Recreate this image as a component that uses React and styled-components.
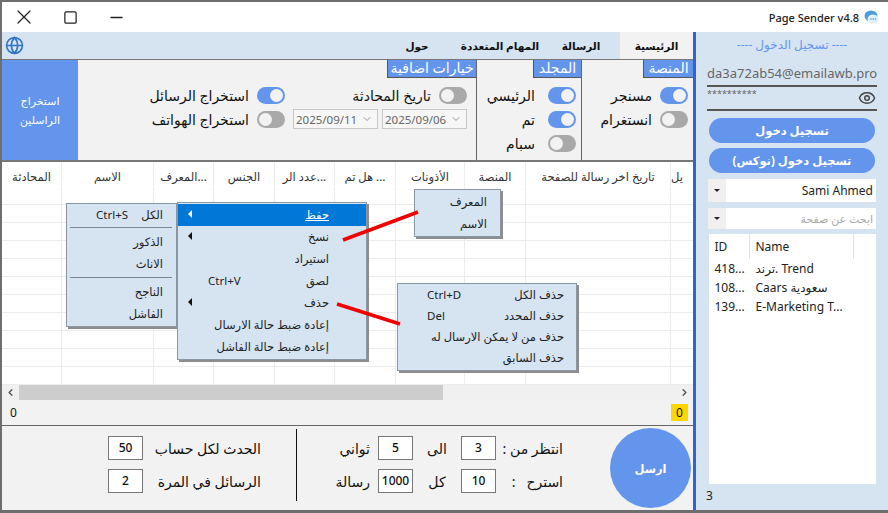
import styled, { createGlobalStyle } from 'styled-components';
import { X, Square, Minus, Globe, Eye, ChevronDown, ChevronLeft, ChevronRight } from 'lucide-react';

const GlobalStyle = createGlobalStyle`
  html, body {
    margin: 0;
    padding: 0;
    width: 888px;
    height: 513px;
    overflow: hidden;
    background: #fff;
  }
  * { box-sizing: border-box; }
  body {
    font-family: "Noto Sans", "DejaVu Sans", sans-serif;
    font-size: 12px;
    color: #111;
  }
`;

const ACCENT = '#6495ed';
const PANEL = '#d6e4f2';

const Win = styled.div`
  position: relative;
  width: 888px;
  height: 513px;
  display: flex;
  flex-direction: column;
  border-top: 2px solid #6e6e6e;
  border-left: 2px solid #6e6e6e;
  border-bottom: 3px solid #6e6e6e;
  overflow: hidden;
`;

const TitleBar = styled.div`
  height: 30px;
  display: flex;
  align-items: center;
  background: #fff;
  flex: none;
`;

const WinButtons = styled.div`
  display: flex;
  align-items: center;
  margin-left: -1px;
  color: #222;
`;

const WinButton = styled.div`
  width: 46px;
  display: flex;
  justify-content: center;
`;

const TitleText = styled.div`
  margin-left: auto;
  display: flex;
  align-items: center;
  gap: 5px;
  padding-right: 9px;
  font-size: 11px;
  font-weight: 500;
  color: #222;
`;

const Body = styled.div`
  flex: 1;
  display: flex;
  min-height: 0;
`;

const Main = styled.div`
  width: 691px;
  display: flex;
  flex-direction: column;
  background: #f2f2f2;
`;

const Tabs = styled.div`
  height: 27px;
  flex: none;
  display: flex;
  align-items: center;
  background: ${PANEL};
  padding-left: 3px;
`;

const Tab = styled.div`
  width: ${(p) => p.$w}px;
  height: 100%;
  display: flex;
  align-items: center;
  justify-content: center;
  font-size: 10.5px;
  font-weight: 700;
  direction: rtl;
  background: ${(p) => (p.$active ? '#f2f2f2' : 'transparent')};
`;

const TabSpacer = styled.div`
  flex: 1;
`;

const Options = styled.div`
  height: 103px;
  flex: none;
  display: flex;
  border-top: 1px solid #777;
  border-bottom: 2px solid #777;
`;

const ExtractButton = styled.div`
  width: 76px;
  flex: none;
  background: ${ACCENT};
  color: #fff;
  font-size: 11px;
  line-height: 19px;
  text-align: center;
  display: flex;
  align-items: center;
  justify-content: center;
`;

const Section = styled.div`
  width: ${(p) => (p.$w ? `${p.$w}px` : 'auto')};
  flex: ${(p) => (p.$w ? 'none' : '1')};
  display: flex;
  flex-direction: column;
  align-items: flex-end;
  border-right: 1px solid #666;
  &:last-child { border-right: none; }
`;

const Badge = styled.div`
  height: 18px;
  padding: 0 2px;
  width: ${(p) => p.$w}px;
  background: ${ACCENT};
  color: #fff;
  font-size: 14px;
  line-height: 16px;
  text-align: center;
  white-space: nowrap;
  direction: rtl;
  border-left: 1px solid #555;
  border-bottom: 1px solid #555;
`;

const SectionBody = styled.div`
  display: flex;
  gap: 8px;
  padding: 9px ${(p) => p.$pr}px 0 0;
`;

const Stack = styled.div`
  display: flex;
  flex-direction: column;
  align-items: flex-end;
  gap: ${(p) => p.$gap || 7}px;
`;

const ToggleRow = styled.div`
  height: 17px;
  display: flex;
  align-items: center;
  justify-content: flex-end;
  gap: ${(p) => p.$gap}px;
`;

const ToggleLabel = styled.span`
  font-size: 14px;
  direction: rtl;
  white-space: nowrap;
`;

const ToggleTrack = styled.div`
  width: 28px;
  height: 17px;
  border-radius: 9px;
  padding: 2px;
  display: flex;
  justify-content: ${(p) => (p.$on ? 'flex-end' : 'flex-start')};
  background: ${(p) => (p.$on ? ACCENT : '#a9a9a9')};
`;

const ToggleKnob = styled.div`
  width: 13px;
  height: 13px;
  border-radius: 50%;
  background: #f2f2f2;
`;

const Toggle = ({ label, on, gap = 8 }) => (
  <ToggleRow $gap={gap}>
    <ToggleLabel>{label}</ToggleLabel>
    <ToggleTrack $on={on}>
      <ToggleKnob />
    </ToggleTrack>
  </ToggleRow>
);

const Dates = styled.div`
  display: flex;
  gap: 4px;
`;

const DateBox = styled.div`
  width: 85px;
  height: 20px;
  display: flex;
  align-items: center;
  justify-content: space-between;
  padding: 0 4px 0 2px;
  background: #f7f7f7;
  border: 1px solid #c8c8c8;
  color: #666;
  font-size: 11.5px;
`;

const Table = styled.div`
  height: 223px;
  flex: none;
  background: #fff;
  overflow: hidden;
`;

const Row = styled.div`
  height: ${(p) => p.$h}px;
  display: flex;
  border-bottom: 1px solid ${(p) => (p.$head ? 'transparent' : '#ececec')};
`;

const Cell = styled.div`
  width: ${(p) => p.$w}px;
  flex: none;
  padding-top: ${(p) => (p.$head ? 4 : 0)}px;
  border-right: 1px solid #ececec;
  display: flex;
  align-items: center;
  justify-content: ${(p) => p.$align || 'center'};
  overflow: hidden;
  white-space: nowrap;
  font-size: 11.5px;
  font-weight: 500;
  color: #333;
`;

const ScrollBar = styled.div`
  height: 15px;
  flex: none;
  display: flex;
  align-items: center;
  background: #f0f0f0;
  color: #555;
`;

const ScrollArrow = styled.div`
  width: 17px;
  flex: none;
  display: flex;
  justify-content: center;
`;

const ScrollTrack = styled.div`
  flex: 1;
  height: 100%;
`;

const ScrollThumb = styled.div`
  width: 424px;
  height: 100%;
  background: #cdcdcd;
`;

const Status = styled.div`
  height: 26px;
  flex: none;
  display: flex;
  align-items: center;
  justify-content: space-between;
  padding: 0 5px 0 8px;
  font-size: 12px;
  border-bottom: 1px solid #666;
`;

const Counter = styled.div`
  width: 17px;
  height: 17px;
  background: #ffd700;
  text-align: center;
  line-height: 17px;
`;

const Bottom = styled.div`
  flex: 1;
  min-height: 0;
  display: flex;
  align-items: center;
  padding: 0 2px 0 106px;
  background: #f2f2f2;
`;

const FormGrid = styled.div`
  display: grid;
  grid-template-columns: ${(p) => p.$cols};
  row-gap: 9px;
  align-items: center;
  margin-bottom: 7px;
`;

const NumBox = styled.div`
  width: 35px;
  height: 24px;
  background: #fff;
  border: 1px solid #777;
  text-align: center;
  line-height: 21px;
  font-size: 12px;
  font-weight: 500;
`;

const FormLabel = styled.span`
  font-size: 14px;
  direction: rtl;
  white-space: nowrap;
  text-align: ${(p) => p.$align || 'right'};
`;

const Divider = styled.div`
  width: 1px;
  height: 72px;
  background: #111;
  margin: 0 36px 7px 35px;
`;

const SendButton = styled.div`
  width: 81px;
  height: 80px;
  margin-left: auto;
  border-radius: 50%;
  background: ${ACCENT};
  color: #fff;
  font-size: 11.5px;
  font-weight: 700;
  display: flex;
  align-items: center;
  justify-content: center;
`;

const Side = styled.div`
  flex: 1;
  display: flex;
  flex-direction: column;
  align-items: center;
  background: ${PANEL};
  border-left: 3px solid #3064d0;
  padding: 0 10px 0 10px;
`;

const LoginTitle = styled.div`
  height: 27px;
  padding-top: 4px;
  color: ${ACCENT};
  font-size: 12px;
  direction: rtl;
`;

const Field = styled.div`
  width: 170px;
  height: ${(p) => p.$h}px;
  padding-top: ${(p) => (p.$top ? 0 : 2)}px;
  display: flex;
  align-items: ${(p) => (p.$top ? 'flex-start' : 'center')};
  justify-content: space-between;
  border-bottom: 2px solid #555;
  color: #666;
  font-size: ${(p) => p.$fs}px;
  white-space: nowrap;
`;

const EyeSlot = styled.span`
  align-self: center;
  margin-right: 1px;
  display: flex;
`;

const PillButton = styled.div`
  width: 166px;
  height: 25px;
  margin-top: ${(p) => p.$mt}px;
  border-radius: 13px;
  background: ${ACCENT};
  color: #fff;
  font-size: 11.5px;
  font-weight: 700;
  direction: rtl;
  display: flex;
  align-items: center;
  justify-content: center;
`;

const Combo = styled.div`
  width: 168px;
  height: ${(p) => p.$h}px;
  margin-top: ${(p) => p.$mt}px;
  background: #fff;
  display: flex;
  align-items: center;
`;

const ComboArrow = styled.div`
  width: 18px;
  height: 100%;
  background: #f0f0f0;
  display: flex;
  align-items: center;
  justify-content: center;
  &::after {
    content: '';
    border-left: 3px solid transparent;
    border-right: 3px solid transparent;
    border-top: 3px solid #222;
  }
`;

const ComboText = styled.div`
  flex: 1;
  text-align: right;
  padding-right: 3px;
  font-size: ${(p) => (p.$muted ? 11 : 12)}px;
  color: ${(p) => (p.$muted ? '#aaa' : '#222')};
`;

const ListBox = styled.div`
  width: 167px;
  height: 250px;
  margin-top: 5px;
  background: #fff;
`;

const ListRow = styled.div`
  height: ${(p) => p.$h}px;
  display: flex;
  align-items: center;
  font-size: 12px;
  color: #222;
`;

const IdCol = styled.div`
  width: 41px;
  height: 100%;
  padding-left: 6px;
  display: flex;
  align-items: center;
  border-right: 1px solid ${(p) => (p.$head ? '#e2e2e2' : 'transparent')};
`;

const NameCol = styled.div`
  width: 104px;
  height: 100%;
  padding-left: 6px;
  display: flex;
  align-items: center;
  white-space: nowrap;
  border-right: 1px solid ${(p) => (p.$head ? '#e2e2e2' : 'transparent')};
`;

const ListCount = styled.div`
  align-self: flex-start;
  margin-top: 3px;
  font-size: 12px;
  color: #222;
`;

const Menu = styled.div`
  position: absolute;
  left: ${(p) => p.$x}px;
  top: ${(p) => p.$y}px;
  width: ${(p) => p.$w}px;
  padding: 1px 0;
  background: ${PANEL};
  border: 1px solid #8a97a3;
  box-shadow: 2px 2px 0 #8d8d8d;
  z-index: 2;
`;

const MenuItem = styled.div`
  height: ${(p) => p.$h || 22}px;
  display: flex;
  align-items: center;
  padding-right: ${(p) => p.$pr}px;
  padding-left: ${(p) => p.$pl || 0}px;
  padding-bottom: 2px;
  font-size: 11.5px;
  color: ${(p) => (p.$sel ? '#fff' : '#222')};
  background: ${(p) => (p.$sel ? '#0078d7' : 'transparent')};
`;

const MenuLabel = styled.span`
  margin-left: auto;
  direction: rtl;
  white-space: nowrap;
  text-decoration: ${(p) => (p.$sel ? 'underline' : 'none')};
`;

const MenuKey = styled.span`
  font-size: 11.5px;
`;

const MenuArrow = styled.span`
  position: absolute;
  left: 10px;
  width: 0;
  height: 0;
  border-top: 4px solid transparent;
  border-bottom: 4px solid transparent;
  border-right: 4px solid ${(p) => (p.$sel ? '#fff' : '#111')};
`;

const MenuSep = styled.div`
  height: 1px;
  margin: 2px 4px 3px 3px;
  background: #7b8790;
`;

const Arrows = styled.svg`
  position: absolute;
  left: -2px;
  top: -2px;
  z-index: 3;
  pointer-events: none;
`;

const columns = [
  { w: 60, t: 'المحادثة' },
  { w: 92, t: 'الاسم' },
  { w: 60, t: 'المعرف...' },
  { w: 61, t: 'الجنس' },
  { w: 60, t: 'عدد الر...' },
  { w: 61, t: 'هل تم ...' },
  { w: 69, t: 'الأذونات' },
  { w: 61, t: 'المنصة' },
  { w: 145, t: 'تاريخ اخر رسالة للصفحة' },
  { w: 30, t: 'يل', align: 'flex-start' },
];

const ChatIcon = () => (
  <svg width="15" height="15" viewBox="0 0 15 15">
    <ellipse cx="7" cy="6" rx="6.5" ry="5.5" fill="#4d9bdc" />
    <ellipse cx="9" cy="9" rx="5.5" ry="4.5" fill="#dff0fb" />
    <path d="M11 12l2 2.5v-3.5z" fill="#dff0fb" />
    <circle cx="7" cy="9" r=".8" fill="#4d9bdc" />
    <circle cx="9.2" cy="9" r=".8" fill="#4d9bdc" />
    <circle cx="11.4" cy="9" r=".8" fill="#4d9bdc" />
  </svg>
);

const App = () => {
  const rows = Array.from({ length: 11 });

  return (
    <>
      <GlobalStyle />
      <Win>
        <TitleBar>
          <WinButtons>
            <WinButton><X size={24} strokeWidth={1.2} /></WinButton>
            <WinButton><Square size={15} strokeWidth={2} /></WinButton>
            <WinButton><Minus size={19} strokeWidth={1.6} /></WinButton>
          </WinButtons>
          <TitleText>
            Page Sender v4.8
            <ChatIcon />
          </TitleText>
        </TitleBar>
        <Body>
          <Main>
            <Tabs>
              <Globe size={19} color="#2f74c8" strokeWidth={2} />
              <TabSpacer />
              <Tab $w={82}>حول</Tab>
              <Tab $w={84}>المهام المتعددة</Tab>
              <Tab $w={78}>الرسالة</Tab>
              <Tab $w={73} $active>الرئيسية</Tab>
            </Tabs>
            <Options>
              <ExtractButton>
                استخراج
                <br />
                الراسلين
              </ExtractButton>
              <Section>
                <Badge $w={89}>خيارات اضافية</Badge>
                <SectionBody $pr={9}>
                  <Stack>
                    <Toggle label="استخراج الرسائل" on />
                    <Toggle label="استخراج الهواتف" />
                  </Stack>
                  <Stack $gap={5}>
                    <Toggle label="تاريخ المحادثة" />
                    <Dates>
                      <DateBox>
                        2025/09/11
                        <ChevronDown size={12} color="#999" />
                      </DateBox>
                      <DateBox>
                        2025/09/06
                        <ChevronDown size={12} color="#999" />
                      </DateBox>
                    </Dates>
                  </Stack>
                </SectionBody>
              </Section>
              <Section $w={105}>
                <Badge $w={48}>المجلد</Badge>
                <SectionBody $pr={5}>
                  <Stack>
                    <Toggle label="الرئيسي" on gap={13} />
                    <Toggle label="تم" on gap={13} />
                    <Toggle label="سبام" gap={13} />
                  </Stack>
                </SectionBody>
              </Section>
              <Section $w={111}>
                <Badge $w={50}>المنصة</Badge>
                <SectionBody $pr={5}>
                  <Stack>
                    <Toggle label="مسنجر" on />
                    <Toggle label="انستغرام" />
                  </Stack>
                </SectionBody>
              </Section>
            </Options>
            <Table>
              <Row $h={25} $head>
                {columns.map((c) => (
                  <Cell key={c.t} $w={c.w} $align={c.align} $head>{c.t}</Cell>
                ))}
              </Row>
              {rows.map((_, i) => (
                <Row key={i} $h={18}>
                  {columns.map((c) => (
                    <Cell key={c.t} $w={c.w} />
                  ))}
                </Row>
              ))}
            </Table>
            <ScrollBar>
              <ScrollArrow><ChevronLeft size={11} strokeWidth={3} /></ScrollArrow>
              <ScrollTrack><ScrollThumb /></ScrollTrack>
              <ScrollArrow><ChevronRight size={11} strokeWidth={3} /></ScrollArrow>
            </ScrollBar>
            <Status>
              <span>0</span>
              <Counter>0</Counter>
            </Status>
            <Bottom>
              <FormGrid $cols="35px 118px">
                <NumBox>50</NumBox>
                <FormLabel>الحدث لكل حساب</FormLabel>
                <NumBox>2</NumBox>
                <FormLabel>الرسائل في المرة</FormLabel>
              </FormGrid>
              <Divider />
              <FormGrid $cols="37px 8px 35px 48px 35px 67px">
                <FormLabel>ثواني</FormLabel>
                <span />
                <NumBox>5</NumBox>
                <FormLabel $align="center">الى</FormLabel>
                <NumBox>3</NumBox>
                <FormLabel>انتظر من :</FormLabel>
                <FormLabel>رسالة</FormLabel>
                <span />
                <NumBox>1000</NumBox>
                <FormLabel $align="center">كل</FormLabel>
                <NumBox>10</NumBox>
                <FormLabel>استرح &nbsp; :</FormLabel>
              </FormGrid>
              <SendButton>ارسل</SendButton>
            </Bottom>
          </Main>
          <Side>
            <LoginTitle>---- تسجيل الدخول ----</LoginTitle>
            <Field $h={28} $fs={13}>da3a72ab54@emailawb.pro</Field>
            <Field $h={24} $fs={9} $top>
              **********
              <EyeSlot><Eye size={18} color="#444" /></EyeSlot>
            </Field>
            <PillButton $mt={7}>تسجيل دخول</PillButton>
            <PillButton $mt={5}>تسجيل دخول (نوكس)</PillButton>
            <Combo $h={23} $mt={6}>
              <ComboArrow />
              <ComboText>Sami Ahmed</ComboText>
            </Combo>
            <Combo $h={21} $mt={6}>
              <ComboArrow />
              <ComboText $muted>ابحث عن صفحة</ComboText>
            </Combo>
            <ListBox>
              <ListRow $h={25}>
                <IdCol $head>ID</IdCol>
                <NameCol $head>Name</NameCol>
              </ListRow>
              <ListRow $h={19}>
                <IdCol>418...</IdCol>
                <NameCol>ترند. Trend</NameCol>
              </ListRow>
              <ListRow $h={19}>
                <IdCol>108...</IdCol>
                <NameCol>Caars سعودية</NameCol>
              </ListRow>
              <ListRow $h={19}>
                <IdCol>139...</IdCol>
                <NameCol>E-Marketing T...</NameCol>
              </ListRow>
            </ListBox>
            <ListCount>3</ListCount>
          </Side>
        </Body>

        <Menu $x={64} $y={201} $w={111}>
          <MenuItem $pr={13} $pl={29} $h={20}>
            <MenuKey>Ctrl+S</MenuKey>
            <MenuLabel>الكل</MenuLabel>
          </MenuItem>
          <MenuSep />
          <MenuItem $pr={13}><MenuLabel>الذكور</MenuLabel></MenuItem>
          <MenuItem $pr={13}><MenuLabel>الاناث</MenuLabel></MenuItem>
          <MenuSep />
          <MenuItem $pr={13}><MenuLabel>الناجح</MenuLabel></MenuItem>
          <MenuItem $pr={13}><MenuLabel>الفاشل</MenuLabel></MenuItem>
        </Menu>

        <Menu $x={175} $y={200} $w={190}>
          <MenuItem $sel $pr={37}>
            <MenuArrow $sel />
            <MenuLabel $sel>حفظ</MenuLabel>
          </MenuItem>
          <MenuItem $pr={37}>
            <MenuArrow />
            <MenuLabel>نسخ</MenuLabel>
          </MenuItem>
          <MenuItem $pr={37}><MenuLabel>استيراد</MenuLabel></MenuItem>
          <MenuItem $pr={37} $pl={30}>
            <MenuKey>Ctrl+V</MenuKey>
            <MenuLabel>لصق</MenuLabel>
          </MenuItem>
          <MenuItem $pr={37}>
            <MenuArrow />
            <MenuLabel>حذف</MenuLabel>
          </MenuItem>
          <MenuItem $pr={37}><MenuLabel>إعادة ضبط حالة الارسال</MenuLabel></MenuItem>
          <MenuItem $pr={37}><MenuLabel>إعادة ضبط حالة الفاشل</MenuLabel></MenuItem>
        </Menu>

        <Menu $x={412} $y={187} $w={87}>
          <MenuItem $pr={13}><MenuLabel>المعرف</MenuLabel></MenuItem>
          <MenuItem $pr={13}><MenuLabel>الاسم</MenuLabel></MenuItem>
        </Menu>

        <Menu $x={395} $y={281} $w={180}>
          <MenuItem $pr={12} $pl={29} $h={21}>
            <MenuKey>Ctrl+D</MenuKey>
            <MenuLabel>حذف الكل</MenuLabel>
          </MenuItem>
          <MenuItem $pr={12} $pl={29} $h={21}>
            <MenuKey>Del</MenuKey>
            <MenuLabel>حذف المحدد</MenuLabel>
          </MenuItem>
          <MenuItem $pr={12} $h={21}><MenuLabel>حذف من لا يمكن الارسال له</MenuLabel></MenuItem>
          <MenuItem $pr={12} $h={21}><MenuLabel>حذف السابق</MenuLabel></MenuItem>
        </Menu>

        <Arrows width="888" height="513">
          <line x1="343" y1="240" x2="418" y2="212" stroke="#f00000" strokeWidth="3.5" />
          <line x1="337" y1="304" x2="400" y2="324" stroke="#f00000" strokeWidth="3.5" />
        </Arrows>
      </Win>
    </>
  );
};

export default App;
